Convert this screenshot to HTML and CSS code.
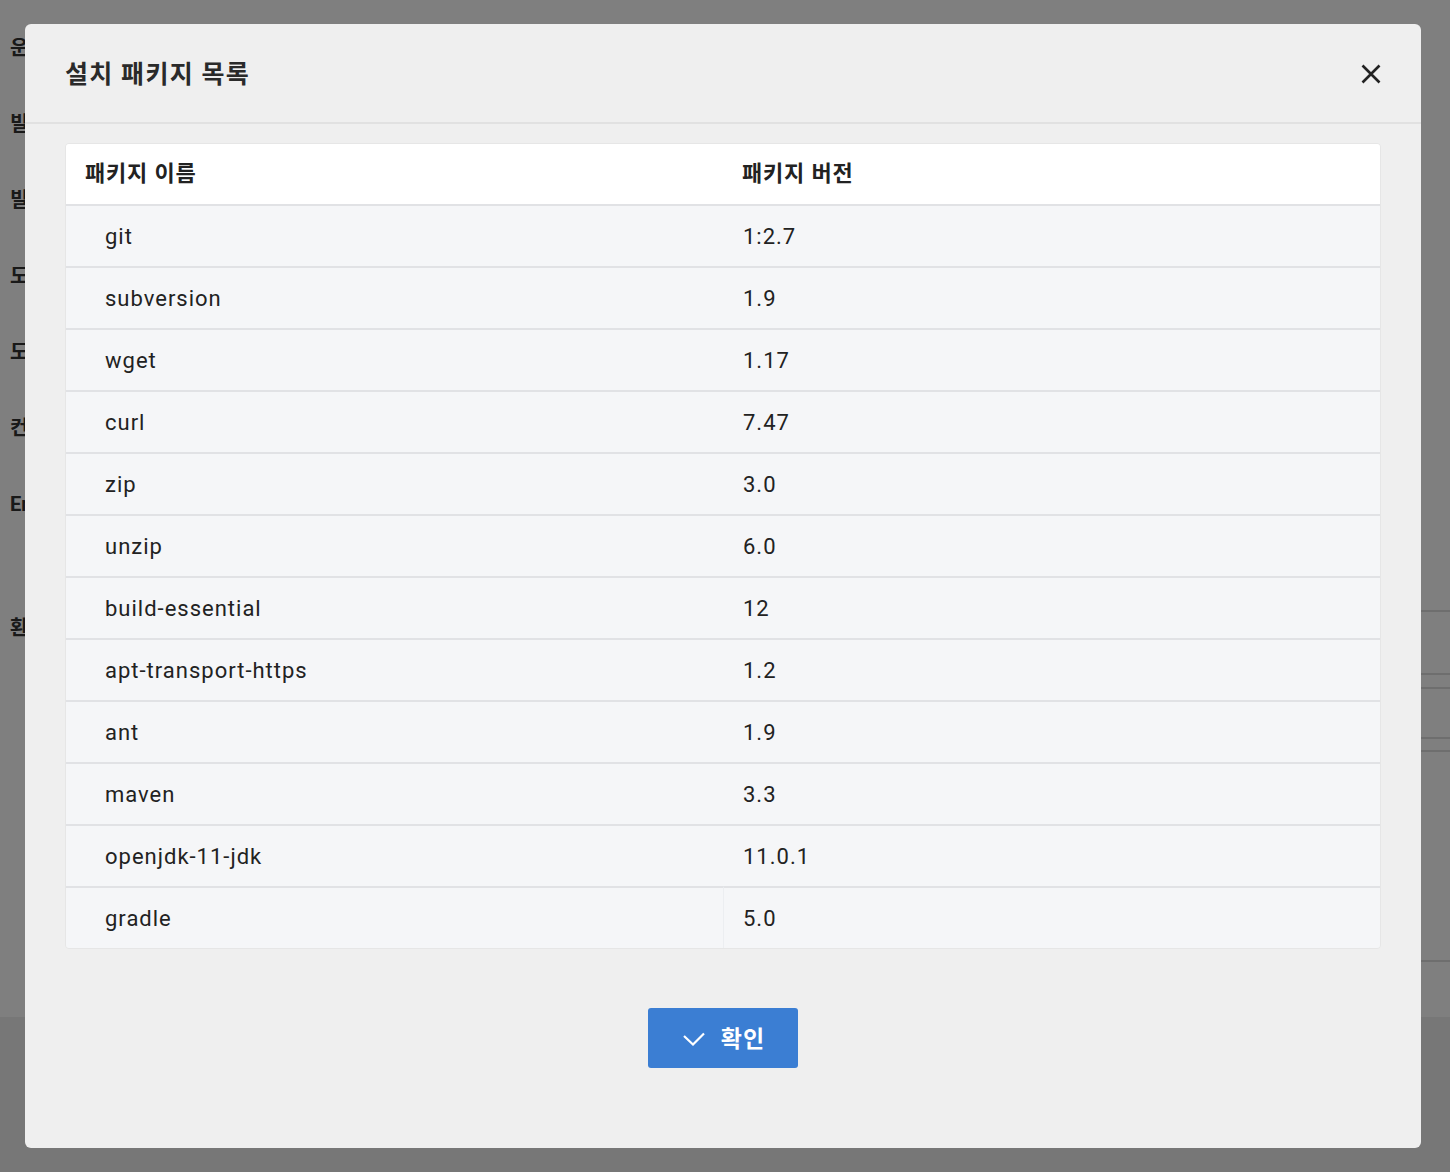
FILE: index.html
```html
<!DOCTYPE html>
<html lang="ko">
<head>
<meta charset="utf-8">
<title>설치 패키지 목록</title>
<link rel="stylesheet" href="styles.css">
</head>
<body>
<div class="page">
  <div class="page-main">
    <ul class="side-list">
      <li>운영체제</li>
      <li>빌드도구</li>
      <li>빌드설정</li>
      <li>도커</li>
      <li>도메인</li>
      <li>컨테이너</li>
      <li class="tall">Env</li>
      <li>환경변수</li>
    </ul>
    <div class="content">
      <div class="ct-spacer"></div>
      <div class="ct-row h63"></div>
      <div class="ct-row h14"></div>
      <div class="ct-row h50"></div>
      <div class="ct-row h13"></div>
      <div class="ct-row h210"></div>
      <div class="ct-row"></div>
    </div>
  </div>
</div>

<div class="overlay">
  <div class="modal">
    <div class="modal-header">
      <h2 class="modal-title">설치 패키지 목록</h2>
      <button class="close-btn" aria-label="닫기">
        <svg width="20" height="20" viewBox="0 0 20 20"><path d="M1.5 1.5 L18.5 18.5 M18.5 1.5 L1.5 18.5" stroke="#222" stroke-width="2.6" stroke-linecap="butt" fill="none"/></svg>
      </button>
    </div>
    <div class="modal-body">
      <table class="pkg-table">
        <thead>
          <tr><th>패키지 이름</th><th>패키지 버전</th></tr>
        </thead>
        <tbody>
          <tr><td>git</td><td>1:2.7</td></tr>
          <tr><td>subversion</td><td>1.9</td></tr>
          <tr><td>wget</td><td>1.17</td></tr>
          <tr><td>curl</td><td>7.47</td></tr>
          <tr><td>zip</td><td>3.0</td></tr>
          <tr><td>unzip</td><td>6.0</td></tr>
          <tr><td>build-essential</td><td>12</td></tr>
          <tr><td>apt-transport-https</td><td>1.2</td></tr>
          <tr><td>ant</td><td>1.9</td></tr>
          <tr><td>maven</td><td>3.3</td></tr>
          <tr><td>openjdk-11-jdk</td><td>11.0.1</td></tr>
          <tr class="last"><td>gradle</td><td>5.0</td></tr>
        </tbody>
      </table>
      <div class="modal-footer">
        <button class="ok-btn">
          <svg width="22" height="14" viewBox="0 0 22 14"><path d="M1 4 L10 12.5 L21 1.5" stroke="#fff" stroke-width="2.2" fill="none"/></svg>
          <span>확인</span>
        </button>
      </div>
    </div>
  </div>
</div>
</body>
</html>
```

FILE: styles.css
```css
* { box-sizing: border-box; }

html, body {
  margin: 0;
  padding: 0;
}

body {
  background: #eeeeee;
  font-family: "Roboto", "Noto Sans CJK KR", sans-serif;
  color: #222;
  width: 1450px;
  height: 1172px;
  overflow: hidden;
}

.page {
  background: #eeeeee;
  height: 1172px;
}

.page-main {
  background: #ffffff;
  height: 1017px;
  display: flex;
}

.side-list {
  list-style: none;
  margin: 0;
  padding: 10px 0 0 10px;
  width: 100px;
  flex-shrink: 0;
}

.side-list li {
  height: 76px;
  line-height: 76px;
  font-size: 20px;
  font-weight: 700;
  color: #333;
  white-space: nowrap;
}

.side-list li.tall {
  height: 124px;
  line-height: 76px;
}

.content {
  flex: 1;
  display: flex;
  flex-direction: column;
}

.ct-spacer { height: 610px; }
.ct-row { border-top: 2px solid #dcdcdc; }
.h63 { height: 63px; }
.h14 { height: 14px; }
.h50 { height: 50px; }
.h13 { height: 13px; }
.h210 { height: 210px; }

.overlay {
  position: fixed;
  inset: 0;
  background: rgba(0, 0, 0, 0.5);
}

.modal {
  position: absolute;
  left: 25px;
  top: 24px;
  width: 1396px;
  height: 1124px;
  background: #efefef;
  border-radius: 6px;
  display: flex;
  flex-direction: column;
}

.modal-header {
  height: 100px;
  border-bottom: 2px solid #e1e1e1;
  display: flex;
  align-items: center;
  justify-content: space-between;
  padding: 0 40px 0 40px;
}

.modal-title {
  margin: 0;
  font-size: 25px;
  letter-spacing: 1.3px;
  font-weight: 700;
  color: #2a2a2a;
  padding-bottom: 3px;
}

.close-btn {
  background: none;
  border: 0;
  padding: 0;
  width: 20px;
  height: 20px;
  display: flex;
  margin-top: 2px;
  cursor: pointer;
}

.modal-body {
  padding: 19px 40px 0 40px;
  display: flex;
  flex-direction: column;
}

.pkg-table {
  width: 1316px;
  border-collapse: separate;
  border-spacing: 0;
  table-layout: fixed;
  border: 1px solid #e6e6e6;
  border-radius: 4px;
  overflow: hidden;
  font-size: 22px;
  letter-spacing: 1px;
}

.pkg-table th {
  background: #ffffff;
  height: 60px;
  text-align: left;
  font-weight: 700;
  font-size: 22px;
  letter-spacing: 0.8px;
  color: #222;
  padding: 0 20px 7px 19px;
  width: 50%;
}

.pkg-table td {
  background: #f5f6f8;
  height: 62px;
  border-top: 2px solid #e1e2e5;
  padding: 0 20px 0 39px;
  color: #222;
}

.pkg-table td + td {
  padding-left: 20px;
}

.pkg-table tr.last td + td {
  border-left: 1px solid #eceef1;
  padding-left: 19px;
}

.modal-footer {
  display: flex;
  justify-content: center;
  padding-top: 59px;
}

.ok-btn {
  width: 150px;
  height: 60px;
  background: #3b7ed3;
  border: 0;
  border-radius: 3px;
  color: #fff;
  font-family: "Roboto", "Noto Sans CJK KR", sans-serif;
  font-size: 23px;
  letter-spacing: 1px;
  font-weight: 700;
  display: flex;
  align-items: center;
  justify-content: center;
  gap: 16px;
  padding: 0 0 2px 2px;
  cursor: pointer;
}

.ok-btn svg {
  margin-top: 3px;
}
```
